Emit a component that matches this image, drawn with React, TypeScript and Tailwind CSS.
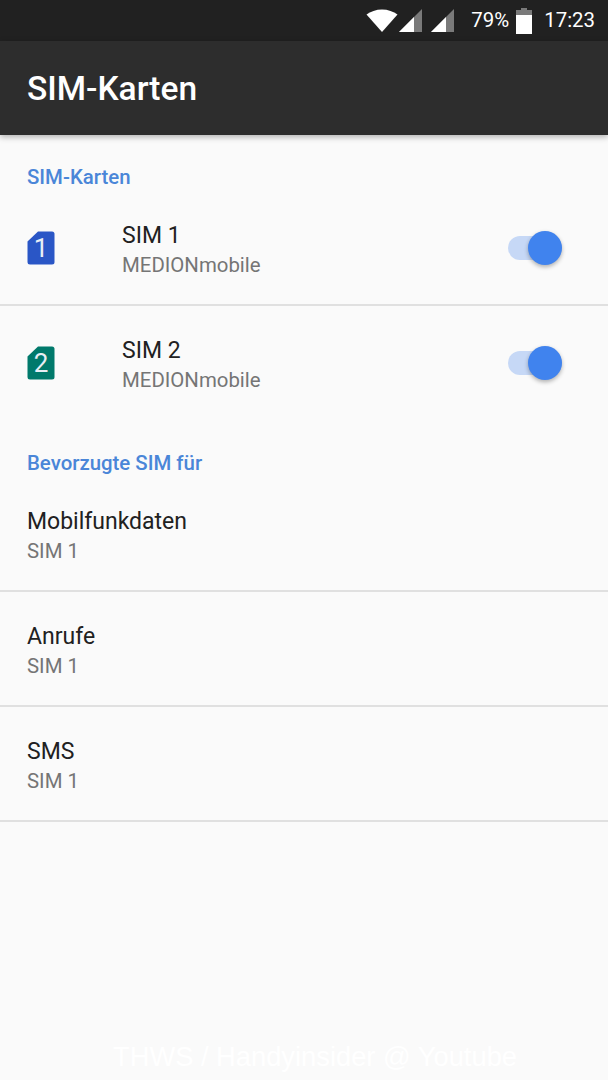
function SimIcon({ n, color }: { n: string; color: string }) {
  return (
    <div className="relative w-[28px] h-[34px] flex items-center justify-center">
      <svg width="28" height="34" viewBox="0 0 28 34" className="absolute inset-0">
        <path d="M11 0.5H25a2.5 2.5 0 0 1 2.5 2.5V31a2.5 2.5 0 0 1-2.5 2.5H3A2.5 2.5 0 0 1 0.5 31V10.5Z" fill={color} />
      </svg>
      <span className="relative text-[26px] leading-none text-[#e8eef5] pt-[1px]">{n}</span>
    </div>
  );
}

function Toggle() {
  return (
    <div className="relative w-[54px] h-[24px] rounded-full bg-[#c6d8f6]">
      <div className="absolute right-0 top-[-5px] w-[34px] h-[34px] rounded-full bg-[#4083ee] shadow-[0_2px_4px_rgba(0,0,0,0.3)]" />
    </div>
  );
}

function SimRow({ n, color, border }: { n: string; color: string; border?: boolean }) {
  return (
    <div className={`flex items-center h-[115px] pl-[27px] pr-[46px] border-b-2 ${border ? "border-[#e0e0e0]" : "border-transparent"}`}>
      <div className="w-[95px]">
        <SimIcon n={n} color={color} />
      </div>
      <div className="flex-1 pt-[4px]">
        <div className="text-[23px] leading-[30px] text-[#212121]">SIM {n}</div>
        <div className="text-[20.4px] leading-[28px] text-[#757575]">MEDIONmobile</div>
      </div>
      <Toggle />
    </div>
  );
}

function PrefRow({ title }: { title: string }) {
  return (
    <div className="flex flex-col justify-center h-[115px] pl-[27px] pt-[4px] border-b-2 border-[#e0e0e0]">
      <div className="text-[23px] leading-[30px] text-[#212121]">{title}</div>
      <div className="text-[20.4px] leading-[28px] text-[#757575]">SIM 1</div>
    </div>
  );
}

export default function App() {
  return (
    <div className="relative w-[608px] h-[1080px] overflow-hidden bg-[#fafafa] font-['Roboto',sans-serif]">
      {/* Status bar */}
      <div className="flex items-center justify-end h-[41px] pr-[13px] bg-[#212121] text-white">
        <svg width="32" height="24" viewBox="0 0 32 24">
          <path d="M16 23L0.5 5.5C4.5 2.5 10 0.5 16 0.5s11.500 2 15.500 5Z" fill="#fff" />
        </svg>
        <svg width="24" height="24" viewBox="0 0 24 24" className="ml-[1px]">
          <path d="M0 23L23 0V23Z" fill="#7a7a7a" />
          <path d="M0 23L15 8V23Z" fill="#fff" />
        </svg>
        <svg width="24" height="24" viewBox="0 0 24 24" className="ml-[8px]">
          <path d="M0 23L23 0V23Z" fill="#7a7a7a" />
          <path d="M0 23L15 8V23Z" fill="#fff" />
        </svg>
        <span className="ml-[16px] text-[20.4px] leading-none">79%</span>
        <svg width="16" height="26" viewBox="0 0 16 26" className="ml-[7px]">
          <path d="M5 0h6v2h5v6H0V2h5Z" fill="#7a7a7a" />
          <path d="M0 7h16v19H0Z" fill="#fff" />
        </svg>
        <span className="ml-[12px] text-[20.4px] leading-none">17:23</span>
      </div>

      {/* Toolbar */}
      <div className="flex items-center h-[94px] pl-[27px] pt-[2px] bg-[#2d2d2d] shadow-[0_2px_6px_rgba(0,0,0,0.3)]">
        <h1 className="text-[33.5px] font-medium text-white">SIM-Karten</h1>
      </div>

      <div className="h-[56px] flex items-end pl-[27px] text-[20.4px] leading-[28px] font-medium text-[#4a86d8]">SIM-Karten</div>
      <SimRow n="1" color="#2a56c6" border />
      <SimRow n="2" color="#00796b" />

      <div className="h-[56px] flex items-end pl-[27px] text-[20.4px] leading-[28px] font-medium text-[#4a86d8]">Bevorzugte SIM für</div>
      <PrefRow title="Mobilfunkdaten" />
      <PrefRow title="Anrufe" />
      <PrefRow title="SMS" />

      {/* Watermark */}
      <div className="absolute left-[113px] top-[1040px] text-[27.300px] leading-[34px] text-white font-['Liberation_Sans',sans-serif] whitespace-nowrap">
        THWS / Handyinsider @ Youtube
      </div>
    </div>
  );
}
